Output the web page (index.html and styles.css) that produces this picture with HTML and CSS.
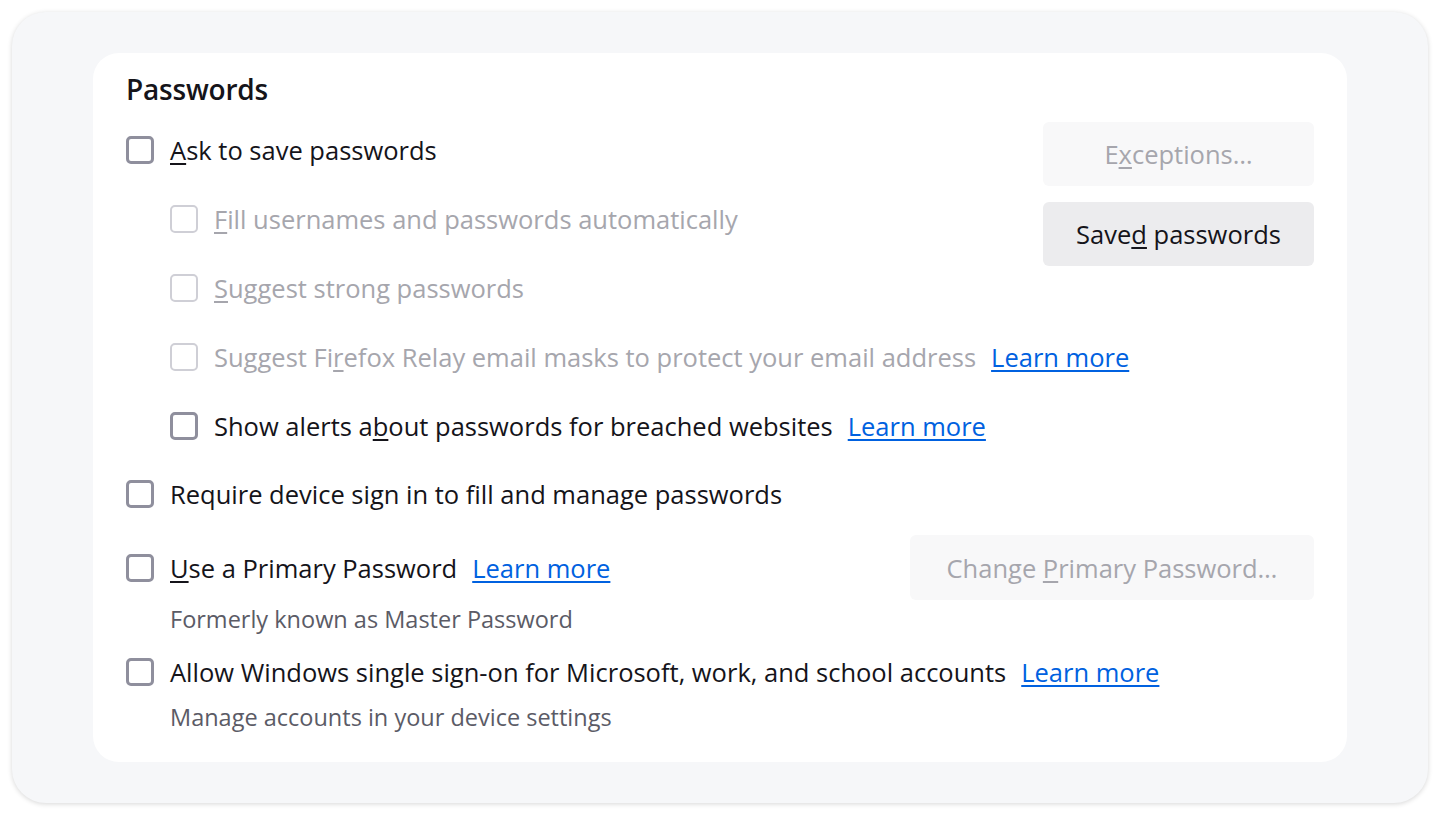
FILE: index.html
```html
<!DOCTYPE html>
<html lang="en">
<head>
<meta charset="utf-8">
<title>Passwords</title>
<link rel="stylesheet" href="styles.css">
</head>
<body>
<div class="frame">
  <section class="card">
    <h2 class="title">Passwords</h2>
    <div class="top">
      <label class="row first"><span class="box"></span><span class="text"><u>A</u>sk to save passwords</span></label>
      <div class="buttons">
        <button class="btn btn-disabled">E<u>x</u>ceptions…</button>
        <button class="btn">Save<u>d</u> passwords</button>
      </div>
      <label class="row nested disabled"><span class="box"></span><span class="text"><u>F</u>ill usernames and passwords automatically</span></label>
      <label class="row nested disabled"><span class="box"></span><span class="text"><u>S</u>uggest strong passwords</span></label>
      <label class="row nested disabled wide"><span class="box"></span><span class="text">Suggest Fi<u>r</u>efox Relay email masks to protect your email address</span><a class="link" href="#">Learn more</a></label>
      <label class="row nested wide"><span class="box"></span><span class="text">Show alerts a<u>b</u>out passwords for breached websites</span><a class="link" href="#">Learn more</a></label>
    </div>
    <label class="row r6"><span class="box"></span><span class="text">Require device sign in to fill and manage passwords</span></label>
    <div class="primary">
      <label class="row"><span class="box"></span><span class="text"><u>U</u>se a Primary Password</span><a class="link" href="#">Learn more</a></label>
      <button class="btn btn-disabled btn-wide">Change <u>P</u>rimary Password…</button>
    </div>
    <p class="sub s1">Formerly known as Master Password</p>
    <label class="row r8"><span class="box"></span><span class="text">Allow Windows single sign-on for Microsoft, work, and school accounts</span><a class="link" href="#">Learn more</a></label>
    <p class="sub s2">Manage accounts in your device settings</p>
  </section>
</div>
</body>
</html>
```
FILE: styles.css
```css
* { box-sizing: border-box; }
html, body { margin: 0; padding: 0; background: #ffffff; }
body {
  padding: 12px;
  font-family: "Open Sans", "Noto Sans", "Liberation Sans", sans-serif;
  color: #15141a;
}
.frame {
  width: 1416px;
  height: 791px;
  background: #f6f7f9;
  border-radius: 34px;
  box-shadow: 0 1px 5px rgba(0, 0, 0, 0.16);
  padding: 41px 81px;
}
.card {
  background: #ffffff;
  border-radius: 26px;
  height: 709px;
  padding: 18px 33px 0 33px;
  display: flex;
  flex-direction: column;
}
.title {
  margin: 0;
  font-size: 28px;
  font-weight: 600;
  line-height: 36px;
  height: 36px;
  letter-spacing: -0.2px;
}
.top {
  margin-top: 15px;
  display: grid;
  grid-template-columns: 1fr 271px;
  row-gap: 33px;
  align-items: start;
}
.top > .row { grid-column: 1; }
.top > .wide { grid-column: 1 / -1; }
.first { margin-top: 10px; }
.buttons {
  grid-column: 2;
  grid-row: 1 / 4;
  display: flex;
  flex-direction: column;
  gap: 16px;
}
.row {
  display: flex;
  align-items: center;
  height: 36px;
  font-size: 25.5px;
  line-height: 36px;
  white-space: nowrap;
}
.row u { text-decoration-thickness: 1.5px; text-underline-offset: 3px; }
.box {
  flex: none;
  width: 28px;
  height: 28px;
  border: 3px solid #8f8f9d;
  border-radius: 5px;
  background: #ffffff;
  margin-right: 16px;
}
.nested { margin-left: 44px; }
.disabled { color: #a6a6ad; }
.disabled .box { border-color: #cfcfd6; border-width: 2.5px; }
.link {
  margin-left: 15px;
  color: #0061e0;
  text-decoration: underline;
  text-decoration-thickness: 1.5px;
  text-underline-offset: 3px;
}
.btn {
  height: 64px;
  border: none;
  border-radius: 6px;
  background: #ececee;
  color: #15141a;
  font-family: inherit;
  font-size: 25.5px;
  padding: 0 16px;
  text-align: center;
  white-space: nowrap;
}
.btn u { text-decoration-thickness: 1.5px; text-underline-offset: 3px; }
.btn-disabled { background: #f8f8f9; color: #a6a6ad; }
.btn-wide { width: 404px; height: 65px; }
.r6 { margin-top: 32px; }
.primary {
  margin-top: 23px;
  display: flex;
  justify-content: space-between;
  align-items: center;
  height: 65px;
}
.sub {
  margin: 4px 0 0 44px;
  font-size: 23.5px;
  line-height: 30px;
  color: #5b5b66;
  white-space: nowrap;
}
.r8 { margin-top: 20px; }
.s2 { margin-top: 12px; }
```
